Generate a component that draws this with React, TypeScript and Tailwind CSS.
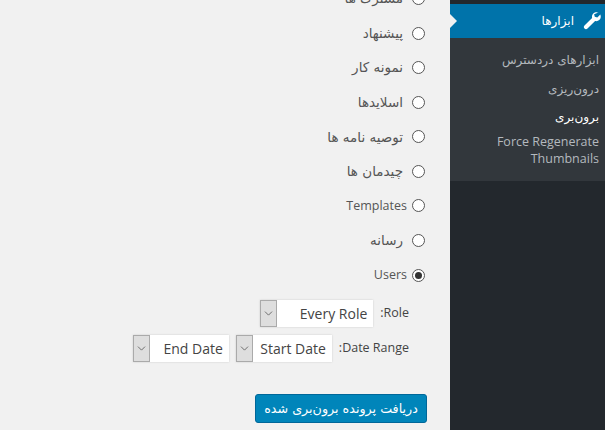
import React from 'react';
import { ChevronDown } from 'lucide-react';

const ARABIC = "font-['DejaVu_Sans','Noto_Sans',sans-serif]";
const LATIN = "font-['Open_Sans','Noto_Sans',sans-serif]";

const options = ['مشترک ها', 'پیشنهاد', 'نمونه کار', 'اسلایدها', 'توصیه نامه ها', 'چیدمان ها', 'Templates', 'رسانه', 'Users'];

const Radio = ({ checked }: { checked?: boolean }) => (
    <span className="flex h-[13px] w-[13px] shrink-0 items-center justify-center rounded-full border border-[#555] bg-white">
        {checked && <span className="h-[7px] w-[7px] rounded-full bg-[#333]" />}
    </span>
);

const Select = ({ label, width }: { label: string; width: string }) => (
    <div className={`flex h-[27px] ${width} items-stretch bg-white shadow-[0_0_2px_rgba(0,0,0,0.15)]`}>
        <span className="flex w-[17px] shrink-0 items-center justify-center border border-[#aaa] bg-[#dedede] text-[#555]">
            <ChevronDown size={13} strokeWidth={1.5} />
        </span>
        <span className={`flex-1 pr-[6px] text-right text-[14px] leading-[27px] text-[#444] ${LATIN}`}>{label}</span>
    </div>
);

const subItems = ['ابزارهای دردسترس', 'درون‌ریزی', 'برون‌بری'];

export default function App() {
    return (
        <div className="flex h-[430px] w-[605px] overflow-hidden bg-[#f1f1f1]">
            {/* content */}
            <div className="w-[450px] shrink-0 pr-[25px]">
                <div className="-mt-[11.6px] flex flex-col items-end gap-[14.6px]">
                    {options.map((o, i) => {
                        const isLatin = /^[A-Z]/.test(o);
                        return (
                            <div key={o} className={`flex h-[20px] items-center ${isLatin ? 'gap-[5px]' : 'gap-[9px]'}`}>
                                <span className={isLatin ? `text-[12.5px] text-[#555] ${LATIN}` : `text-[13.5px] text-[#555] ${ARABIC}`} dir={isLatin ? 'ltr' : 'rtl'}>
                                    {o}
                                </span>
                                <Radio checked={i === options.length - 1} />
                            </div>
                        );
                    })}
                </div>

                <div className={`mt-[14.6px] flex flex-col items-end gap-[8px] pr-[16px] text-[12.5px] text-[#444] ${LATIN}`}>
                    <div className="flex items-center gap-[7px]">
                        <Select label="Every Role" width="w-[113px]" />
                        <span>:Role</span>
                    </div>
                    <div className="flex items-center gap-[7px]">
                        <Select label="End Date" width="w-[96px]" />
                        <Select label="Start Date" width="w-[96px]" />
                        <span>:Date Range</span>
                    </div>
                </div>

                <div className="mt-[32px] flex justify-end">
                    <button className={`h-[29px] w-[172px] -mr-[2px] rounded-[3px] border border-[#006799] bg-[#0085ba] text-[12.7px] text-white ${ARABIC}`} dir="rtl">
                        دریافت پرونده برون‌بری شده
                    </button>
                </div>
            </div>

            {/* admin sidebar */}
            <div className="flex w-[155px] shrink-0 flex-col bg-[#23282d]">
                <div className="h-[4px]" />
                <div className="relative flex h-[34px] items-center justify-end gap-[8px] bg-[#0073aa] pr-[3px] text-white">
                    <span className="absolute left-0 top-[10px] h-0 w-0 border-y-[7px] border-l-[7px] border-y-transparent border-l-[#f1f1f1]" />
                    <span className={`text-[12px] ${ARABIC}`} dir="rtl">ابزارها</span>
                    <svg width="20" height="20" viewBox="0 0 20 20" fill="currentColor">
                        <path d="M16.7 1.8c-1.8-.9-4-.6-5.4.8-1.2 1.2-1.6 2.9-1.2 4.4L2.5 14.6c-.9.9-.9 2.2 0 3 .8.8 2.1.8 3 0l7.6-7.6c1.5.4 3.2 0 4.4-1.2 1.4-1.4 1.7-3.6.8-5.4l-3 3-2.5-.7-.7-2.5 3.6-1.4z" />
                    </svg>
                </div>
                <div className="flex h-[143px] flex-col items-end bg-[#32373c] pr-[6px] pt-[12px] text-right text-[#b4b9be]">
                    {subItems.map((s, i) => (
                        <div key={s} className={`h-[28.5px] text-[12px] leading-[20px] ${ARABIC} ${i === 2 ? 'text-white' : ''}`} dir="rtl">
                            {s}
                        </div>
                    ))}
                    <div className={`-mt-[3px] text-[12.5px] leading-[17px] ${LATIN}`}>
                        Force Regenerate
                        <br />
                        Thumbnails
                    </div>
                </div>
            </div>
        </div>
    );
}
